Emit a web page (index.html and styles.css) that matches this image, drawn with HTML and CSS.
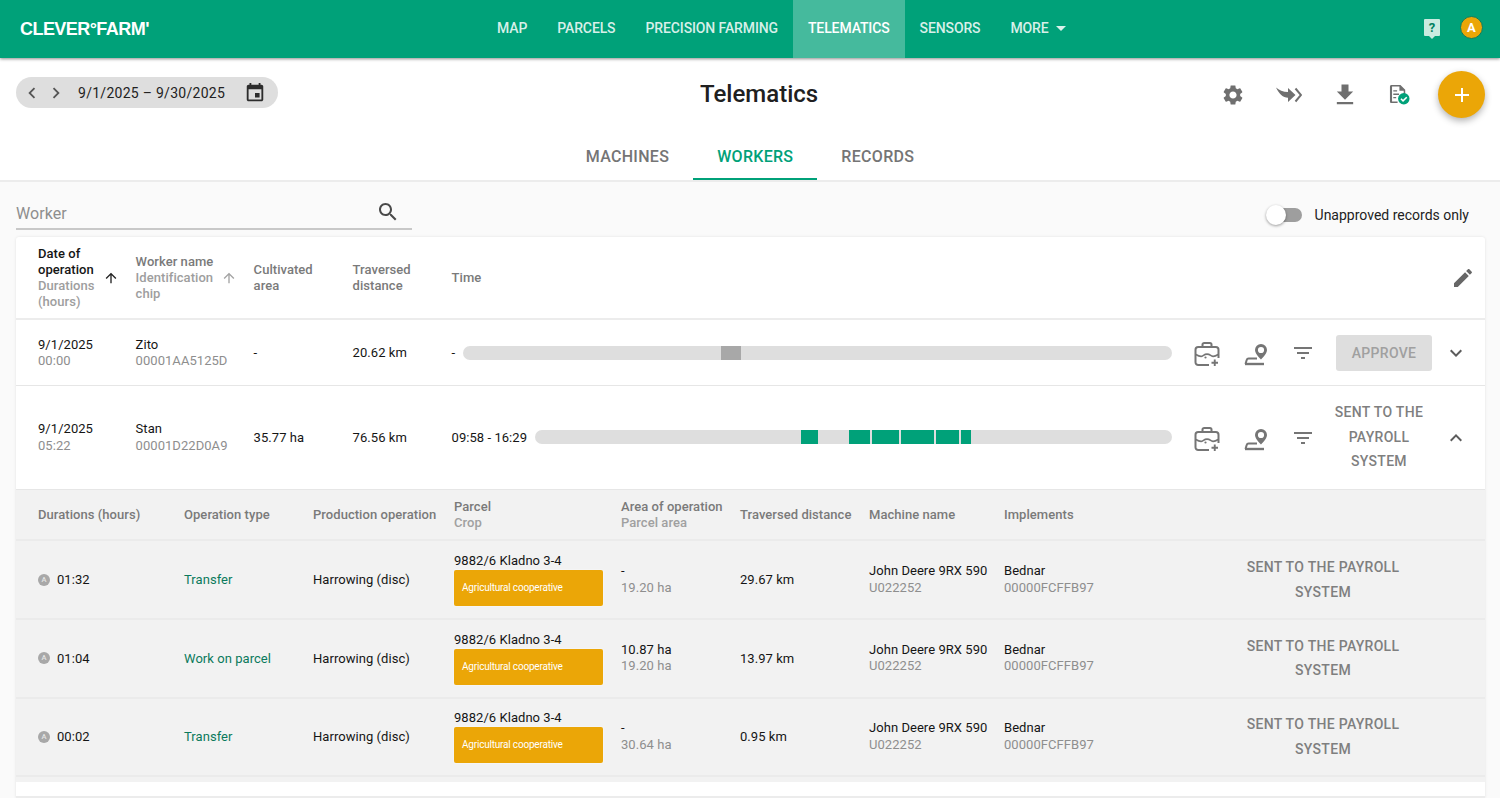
FILE: index.html
```html
<!DOCTYPE html>
<html lang="en">
<head>
<meta charset="utf-8">
<title>Telematics</title>
<link rel="stylesheet" href="styles.css">
</head>
<body>
<svg class="defs" width="0" height="0" aria-hidden="true">
  <symbol id="i-case" viewBox="0 0 26 26">
    <path d="M8.500 7V4.600C8.500 3.700 9.200 3 10.100 3h5.800c.9 0 1.600.7 1.600 1.600V7" fill="none" stroke="currentColor" stroke-width="2"/>
    <path d="M15 25H4.200C2.700 25 1.500 23.800 1.500 22.300V9.700C1.500 8.200 2.700 7 4.200 7h17.600c1.500 0 2.700 1.200 2.700 2.700V18" fill="none" stroke="currentColor" stroke-width="2"/>
    <path d="M1.800 14.500c2.600 1.500 4.400 2.200 6.200 1.700 1.600-.5 2.200-2 5-2s3.600 1.500 5.200 2c1.700.4 3.500-.2 6-1.700" fill="none" stroke="currentColor" stroke-width="1.700"/>
    <circle cx="11.500" cy="17.500" r="1.100" fill="currentColor"/>
    <path d="M19.800 19.500h1.900v2.300h2.300v1.900h-2.300V26h-1.900v-2.300h-2.300v-1.900h2.300z" fill="currentColor"/>
  </symbol>
  <symbol id="i-parcel" viewBox="0 0 26 26">
    <path d="M19 4a6 6 0 0 0-6 6c0 3.900 6 9.500 6 9.500s6-5.600 6-9.500a6 6 0 0 0-6-6zm0 2.900a3.100 3.100 0 1 1 0 6.200 3.100 3.100 0 0 1 0-6.200z" fill="currentColor"/>
    <path d="M3.500 24l1.100-3.800c.3-1 1-1.700 2-1.700H15" fill="none" stroke="currentColor" stroke-width="2"/>
    <path d="M3 24h19" fill="none" stroke="currentColor" stroke-width="2.400"/>
  </symbol>
  <symbol id="i-filter" viewBox="0 0 24 24"><path d="M10 18h4v-2h-4v2zM3 6v2h18V6H3zm3 7h12v-2H6v2z" fill="currentColor"/></symbol>
  <symbol id="i-up" viewBox="0 0 24 24"><path d="M4 12l1.410 1.410L11 7.830V20h2V7.830l5.580 5.590L20 12l-8-8-8 8z" fill="currentColor"/></symbol>
</svg>

<header class="topbar">
  <div class="logo">CLEVER°FARM'</div>
  <nav class="mainnav">
    <a class="navitem">Map</a>
    <a class="navitem">Parcels</a>
    <a class="navitem">Precision farming</a>
    <a class="navitem navitem-on">Telematics</a>
    <a class="navitem">Sensors</a>
    <a class="navitem">More<span class="caret"></span></a>
  </nav>
  <div class="topright">
    <span class="help">?</span>
    <span class="avatar">A</span>
  </div>
</header>

<section class="pagehead">
  <div class="toolbar">
    <div class="datepill">
      <svg class="pillchev" viewBox="0 0 24 24"><path d="M15.410 7.410L14 6l-6 6 6 6 1.410-1.410L10.830 12z"/></svg>
      <svg class="pillchev" viewBox="0 0 24 24"><path d="M10 6L8.590 7.410 13.170 12l-4.580 4.590L10 18l6-6z"/></svg>
      <span class="daterange">9/1/2025 – 9/30/2025</span>
      <svg class="pillcal" viewBox="0 0 24 24"><path d="M17 12h-5v5h5v-5zM16 1v2H8V1H6v2H5c-1.110 0-1.990.9-1.990 2L3 19c0 1.100.89 2 2 2h14c1.100 0 2-.9 2-2V5c0-1.100-.9-2-2-2h-1V1h-2zm3 18H5V8h14v11z"/></svg>
    </div>
    <h1 class="title">Telematics</h1>
    <div class="tools">
      <svg class="tool tool-gear" viewBox="0 0 24 24"><path d="M19.140 12.940c.04-.3.06-.61.06-.94 0-.32-.02-.64-.07-.94l2.030-1.580c.18-.14.23-.41.12-.61l-1.920-3.320c-.12-.22-.37-.29-.59-.22l-2.390.96c-.5-.38-1.030-.7-1.620-.94l-.36-2.540c-.04-.24-.24-.41-.48-.41h-3.840c-.24 0-.43.17-.47.41l-.36 2.540c-.59.24-1.130.57-1.620.94l-2.390-.96c-.22-.08-.47 0-.59.22L2.740 8.870c-.12.21-.08.47.12.61l2.030 1.580c-.05.3-.09.63-.09.94s.02.64.07.94l-2.030 1.580c-.18.14-.23.41-.12.61l1.920 3.320c.12.22.37.29.59.22l2.390-.96c.5.38 1.030.7 1.620.94l.36 2.540c.05.24.24.41.48.41h3.840c.24 0 .44-.17.47-.41l.36-2.540c.59-.24 1.130-.56 1.620-.94l2.390.96c.22.08.47 0 .59-.22l1.920-3.320c.12-.22.07-.47-.12-.61l-2.010-1.580zM12 15.600c-1.980 0-3.600-1.620-3.600-3.600s1.620-3.600 3.600-3.600 3.600 1.620 3.600 3.600-1.620 3.600-3.600 3.600z"/></svg>
      <svg class="tool tool-send" viewBox="0 0 26 16"><path d="M0 .5C3 3 7 5 12 5V1l7.500 7-7.500 7v-4.200C7 10.800 3 7 0 .5z"/><path class="send-chev" d="M19.500 1.500L25 8l-5.500 6.500"/></svg>
      <svg class="tool tool-down" viewBox="0 0 24 24"><path d="M19 9h-4V3H9v6H5l7 7 7-7zM5 18v2h14v-2H5z"/></svg>
      <svg class="tool tool-report" viewBox="0 0 22 22">
        <path d="M2.500 1h9.500l5 5v5h-1.600V7h-4.500V2.600H3.200v15.800H9V20H2.500C1.700 20 1 19.300 1 18.500v-16C1 1.700 1.700 1 2.500 1z"/>
        <path d="M4.500 6.500h4v1.400h-4zM4.500 10h6v1.400h-6zM4.500 13.500h3v1.400h-3z"/>
        <circle class="ok-dot" cx="15.500" cy="15.500" r="6"/>
        <path class="ok-tick" d="M12.500 15.500l2.200 2.200 3.900-3.900"/>
      </svg>
      <button class="fab" type="button"><svg class="fabplus" viewBox="0 0 24 24"><path d="M19 13h-6v6h-2v-6H5v-2h6V5h2v6h6v2z"/></svg></button>
    </div>
  </div>
  <div class="tabs">
    <a class="tab">Machines</a>
    <a class="tab tab-on">Workers</a>
    <a class="tab">Records</a>
  </div>
</section>

<section class="filters">
  <label class="searchbox">
    <span class="searchph">Worker</span>
    <svg class="searchicon" viewBox="0 0 24 24"><path d="M15.500 14h-.79l-.28-.27C15.410 12.590 16 11.110 16 9.500 16 5.910 13.090 3 9.500 3S3 5.910 3 9.500 5.910 16 9.500 16c1.610 0 3.090-.59 4.230-1.570l.27.28v.79l5 4.990L20.490 19l-4.990-5zm-6 0C7.010 14 5 11.990 5 9.500S7.010 5 9.500 5 14 7.010 14 9.500 11.990 14 9.500 14z"/></svg>
  </label>
  <div class="switchwrap">
    <span class="switch"><span class="thumb"></span></span>
    <span class="switchlabel">Unapproved records only</span>
  </div>
</section>

<main class="card">
  <div class="mainrow headrow">
    <div class="hcell sorted">
      <div class="hcelltext hcelltext-date"><b>Date of operation</b><span>Durations (hours)</span></div>
      <svg class="sorticon sorticon-dark"><use href="#i-up"/></svg>
    </div>
    <div class="hcell sorted">
      <div class="hcelltext hcelltext-worker"><em>Worker name</em><span>Identification chip</span></div>
      <svg class="sorticon"><use href="#i-up"/></svg>
    </div>
    <div class="hcell"><em>Cultivated area</em></div>
    <div class="hcell"><em>Traversed distance</em></div>
    <div class="hcell timehead">
      <em>Time</em>
      <svg class="pencil" viewBox="0 0 24 24"><path d="M3 17.250V21h3.750L17.810 9.940l-3.750-3.750L3 17.250zM20.710 7.040c.39-.39.39-1.020 0-1.410l-2.340-2.340c-.39-.39-1.020-.39-1.410 0l-1.830 1.830 3.750 3.750 1.830-1.830z"/></svg>
    </div>
  </div>

  <div class="mainrow datarow datarow-a">
    <div class="stack"><span>9/1/2025</span><small>00:00</small></div>
    <div class="stack"><span>Zito</span><small>00001AA5125D</small></div>
    <div>-</div>
    <div>20.62 km</div>
    <div class="timecell">
      <span>-</span>
      <div class="bar"><i class="seg seg-gray" style="left:258px;width:20px"></i></div>
    </div>
    <div class="rowicons">
      <svg class="rowicon"><use href="#i-case"/></svg>
      <svg class="rowicon"><use href="#i-parcel"/></svg>
      <svg class="rowicon"><use href="#i-filter"/></svg>
    </div>
    <div class="actioncell"><button class="approve" type="button">Approve</button></div>
    <svg class="chev" viewBox="0 0 24 24"><path d="M16.590 8.590L12 13.170 7.410 8.590 6 10l6 6 6-6z"/></svg>
  </div>

  <div class="mainrow datarow datarow-b">
    <div class="stack"><span>9/1/2025</span><small>05:22</small></div>
    <div class="stack"><span>Stan</span><small>00001D22D0A9</small></div>
    <div>35.77 ha</div>
    <div>76.56 km</div>
    <div class="timecell">
      <span>09:58 - 16:29</span>
      <div class="bar">
        <i class="seg" style="left:266px;width:17px"></i>
        <i class="seg" style="left:314px;width:21px"></i>
        <i class="seg" style="left:337px;width:27px"></i>
        <i class="seg" style="left:366px;width:33px"></i>
        <i class="seg" style="left:401px;width:23px"></i>
        <i class="seg" style="left:426px;width:10px"></i>
      </div>
    </div>
    <div class="rowicons">
      <svg class="rowicon"><use href="#i-case"/></svg>
      <svg class="rowicon"><use href="#i-parcel"/></svg>
      <svg class="rowicon"><use href="#i-filter"/></svg>
    </div>
    <div class="actioncell"><div class="sent sent-narrow">Sent to the payroll system</div></div>
    <svg class="chev" viewBox="0 0 24 24"><path d="M12 8l-6 6 1.410 1.410L12 10.830l4.590 4.580L18 14z"/></svg>
  </div>

  <div class="details">
    <div class="detrow dethead">
      <div class="headone"><em>Durations (hours)</em></div>
      <div class="headone"><em>Operation type</em></div>
      <div class="headone"><em>Production operation</em></div>
      <div class="stack"><em>Parcel</em><span>Crop</span></div>
      <div class="stack"><em>Area of operation</em><span>Parcel area</span></div>
      <div class="headone"><em>Traversed distance</em></div>
      <div class="headone"><em>Machine name</em></div>
      <div class="headone"><em>Implements</em></div>
    </div>

    <div class="detrow detdata">
      <div class="dur"><span class="abadge">A</span>01:32</div>
      <div class="optype">Transfer</div>
      <div>Harrowing (disc)</div>
      <div class="parcel"><span>9882/6 Kladno 3-4</span><span class="chip">Agricultural cooperative</span></div>
      <div class="stack"><span>-</span><small>19.20 ha</small></div>
      <div>29.67 km</div>
      <div class="stack"><span>John Deere 9RX 590</span><small>U022252</small></div>
      <div class="stack"><span>Bednar</span><small>00000FCFFB97</small></div>
      <div class="sent sent-wide">Sent to the payroll system</div>
    </div>

    <div class="detrow detdata">
      <div class="dur"><span class="abadge">A</span>01:04</div>
      <div class="optype">Work on parcel</div>
      <div>Harrowing (disc)</div>
      <div class="parcel"><span>9882/6 Kladno 3-4</span><span class="chip">Agricultural cooperative</span></div>
      <div class="stack"><span>10.87 ha</span><small>19.20 ha</small></div>
      <div>13.97 km</div>
      <div class="stack"><span>John Deere 9RX 590</span><small>U022252</small></div>
      <div class="stack"><span>Bednar</span><small>00000FCFFB97</small></div>
      <div class="sent sent-wide">Sent to the payroll system</div>
    </div>

    <div class="detrow detdata">
      <div class="dur"><span class="abadge">A</span>00:02</div>
      <div class="optype">Transfer</div>
      <div>Harrowing (disc)</div>
      <div class="parcel"><span>9882/6 Kladno 3-4</span><span class="chip">Agricultural cooperative</span></div>
      <div class="stack"><span>-</span><small>30.64 ha</small></div>
      <div>0.95 km</div>
      <div class="stack"><span>John Deere 9RX 590</span><small>U022252</small></div>
      <div class="stack"><span>Bednar</span><small>00000FCFFB97</small></div>
      <div class="sent sent-wide">Sent to the payroll system</div>
    </div>
    <div class="detpad"></div>
  </div>
  <div class="cardgap"></div>
  <div class="nextrow"></div>
</main>
</body>
</html>
```

FILE: styles.css
```css
* { box-sizing: border-box; }
html, body { margin: 0; height: 798px; overflow: hidden; }
body {
  font-family: Roboto, "Liberation Sans", sans-serif;
  font-size: 13px;
  color: #151515;
  background: #fafafa;
  letter-spacing: .05px;
}
.defs { display: block; height: 0; }

/* top bar */
.topbar {
  position: relative;
  z-index: 2;
  display: flex;
  align-items: stretch;
  height: 58px;
  background: #00a179;
  box-shadow: 0 1px 3px rgba(0,0,0,.45);
}
.logo {
  width: 482px;
  padding: 18px 0 0 20px;
  font: 700 18px/22px "Liberation Sans", sans-serif;
  letter-spacing: -.55px;
  color: #fff;
}
.mainnav { display: flex; }
.navitem {
  display: flex;
  align-items: center;
  padding: 0 15px 2px;
  font-size: 14px;
  font-weight: 500;
  letter-spacing: -.12px;
  text-transform: uppercase;
  color: rgba(255,255,255,.85);
}
.navitem-on { color: #fff; background: rgba(255,255,255,.27); }
.caret {
  margin-left: 7px;
  border: 5px solid transparent;
  border-top-color: rgba(255,255,255,.85);
  border-bottom: 0;
}
.topright { display: flex; align-items: center; margin-left: auto; padding: 0 17px 4px 0; gap: 20px; }
.help {
  position: relative;
  width: 16px;
  height: 17px;
  border-radius: 1px;
  background: #c9ebe0;
  color: #00805f;
  font: 700 13px/17px Roboto, sans-serif;
  text-align: center;
}
.help::after {
  content: "";
  position: absolute;
  left: 5px;
  bottom: -3px;
  border: 3px solid transparent;
  border-top-color: #c9ebe0;
  border-bottom: 0;
}
.avatar {
  width: 23px;
  height: 23px;
  border-radius: 50%;
  background: #eba607;
  border: 1px solid #0a7c60;
  color: #fff;
  font: 700 13px/21px Roboto, sans-serif;
  text-align: center;
}

/* page head */
.pagehead { background: #fff; height: 124px; border-bottom: 2px solid #ececec; }
.toolbar {
  display: grid;
  grid-template-columns: 684px auto 1fr;
  align-items: center;
  height: 72px;
  padding: 0 15px 0 16px;
}
.datepill {
  display: flex;
  align-items: center;
  width: 262px;
  height: 31px;
  margin-top: -3px;
  padding-left: 5px;
  border-radius: 16px;
  background: #dedede;
}
.pillchev { width: 22px; height: 22px; margin-right: 2px; fill: #555; }
.daterange { margin-left: 9px; font-size: 14px; letter-spacing: .28px; color: #222; }
.pillcal { width: 22px; height: 22px; margin-left: 19px; fill: #2c2c2c; }
.title { margin: 0; font-size: 24px; font-weight: 500; letter-spacing: 0; color: #202020; }
.tools { display: flex; align-items: center; justify-content: flex-end; padding-top: 1px; }
.tool { fill: #6f6f6f; flex: none; }
.tool-gear { width: 24px; height: 24px; margin-right: 31px; }
.tool-send { width: 26px; height: 16px; margin-right: 29px; }
.send-chev { fill: none; stroke: #6f6f6f; stroke-width: 2; }
.tool-down { width: 28px; height: 28px; margin-right: 30px; }
.tool-report { width: 21px; height: 21px; margin-right: 28px; }
.ok-dot { fill: #00a179; }
.ok-tick { fill: none; stroke: #fff; stroke-width: 1.600; }
.fab {
  flex: none;
  display: flex;
  align-items: center;
  justify-content: center;
  width: 47px;
  height: 47px;
  padding: 0;
  border: 0;
  border-radius: 50%;
  background: #eba607;
  box-shadow: 0 3px 7px rgba(0,0,0,.3);
}
.fabplus { width: 24px; height: 24px; fill: #fff; }
.tabs { display: flex; justify-content: center; height: 50px; }
.tab {
  display: flex;
  align-items: center;
  padding: 2px 24px 0;
  font-size: 16px;
  font-weight: 500;
  letter-spacing: .3px;
  text-transform: uppercase;
  color: #757575;
}
.tab-on { color: #00a179; border-bottom: 2px solid #00a179; padding-top: 4px; }

/* filters */
.filters { display: flex; justify-content: space-between; align-items: flex-start; height: 55px; padding: 0 31px 0 16px; }
.searchbox {
  display: flex;
  align-items: center;
  justify-content: space-between;
  width: 396px;
  height: 48px;
  padding: 16px 12px 0 0;
  border-bottom: 2px solid #c8c8c8;
}
.searchph { font-size: 16px; color: #8e8e8e; }
.searchicon { width: 24px; height: 24px; fill: #4a4a4a; margin-top: -3px; }
.switchwrap { display: flex; align-items: center; gap: 13px; padding-top: 25px; }
.switch { position: relative; display: block; width: 35px; height: 14px; border-radius: 7px; background: #9e9e9e; }
.thumb {
  position: absolute;
  left: -1px;
  top: -3px;
  width: 20px;
  height: 20px;
  border-radius: 50%;
  background: #fff;
  box-shadow: 0 1px 3px rgba(0,0,0,.4);
}
.switchlabel { font-size: 14px; color: #222; letter-spacing: 0; }

/* card */
.card {
  width: 1469px;
  margin-left: 16px;
  background: #fff;
  border-radius: 3px 3px 0 0;
  box-shadow: 0 0 3px rgba(0,0,0,.1);
}
.mainrow {
  display: grid;
  grid-template-columns: 97.600px 118px 99px 99px 731.400px 144px 105px 48px;
  align-items: center;
  padding-left: 22px;
  border-bottom: 1px solid #e6e6e6;
}
.headrow { grid-template-columns: 97.600px 118px 99px 99px 1fr; height: 83px; border-bottom-width: 2px; border-bottom-color: #ececec; }
.hcell { line-height: 16px; color: #7a7a7a; font-weight: 500; }
.hcell em { font-style: normal; display: block; width: 70px; }
.hcell b { display: block; font-weight: 500; color: #151515; }
.hcell span { display: block; color: #9e9e9e; }
.sorted { display: flex; align-items: center; }
.hcelltext { flex: none; }
.hcelltext em { width: auto; }
.hcelltext-date { width: 65px; }
.hcelltext-worker { width: 85px; }
.hcelltext-worker span { width: 80px; }
.sorticon { width: 16px; height: 16px; color: #a3a3a3; }
.sorticon-dark { color: #222; }
.timehead { display: flex; align-items: center; justify-content: space-between; padding-right: 10px; }
.pencil { width: 24px; height: 24px; fill: #666; }
.datarow-a { height: 66px; }
.datarow-a .stack { padding-top: 1px; }
.datarow-b { height: 103px; border-bottom: 0; }
.datarow-b .bar { margin-top: -1px; }
.stack { display: flex; flex-direction: column; line-height: 16.500px; }
.stack small { font-size: 13px; color: #8e8e8e; }
.timecell { display: flex; align-items: center; gap: 8px; padding-right: 11px; }
.bar { position: relative; flex: 1; height: 14px; border-radius: 7px; background: #dedede; overflow: hidden; }
.seg { position: absolute; top: 0; bottom: 0; background: #00a179; }
.seg-gray { background: #a8a8a8; }
.rowicons { display: flex; align-items: center; }
.rowicon { width: 26px; height: 26px; margin: 0 11px; color: #757575; }
.rowicon:last-child { width: 24px; height: 24px; margin: 0 12px; }
.actioncell { display: flex; justify-content: flex-end; }
.approve {
  width: 96px;
  height: 36px;
  padding: 0;
  border: 0;
  border-radius: 3px;
  background: #dedede;
  font: 500 14px Roboto, sans-serif;
  letter-spacing: .3px;
  text-transform: uppercase;
  color: #a0a0a0;
}
.sent {
  font-size: 14px;
  font-weight: 500;
  line-height: 24.500px;
  letter-spacing: .3px;
  text-align: center;
  text-transform: uppercase;
  color: #7f7f7f;
}
.sent-narrow { width: 96px; margin: -1px 5px 0 0; }
.chev { justify-self: center; width: 24px; height: 24px; fill: #5c5c5c; }

/* detail table */
.details { background: #f2f2f2; border-top: 1px solid #e6e6e6; }
.detrow {
  display: grid;
  grid-template-columns: 146px 129px 141px 167px 119px 129px 135px 224px 190px;
  align-items: center;
  padding-left: 22px;
  border-bottom: 2px solid #ebebeb;
}
.dethead { height: 51.300px; padding-top: 1px; }
.headone { margin-top: -2px; }
.dethead em { font-style: normal; font-weight: 500; color: #7a7a7a; }
.dethead span { color: #a0a0a0; font-weight: 500; }
.detdata { height: 78.670px; }
.dur { display: flex; align-items: center; gap: 7px; }
.abadge {
  width: 12px;
  height: 12px;
  border-radius: 50%;
  background: #a8a8a8;
  color: #e4e4e4;
  font-size: 7.500px;
  font-weight: 500;
  line-height: 12px;
  text-align: center;
}
.optype { color: #0b7a5c; }
.parcel { display: flex; flex-direction: column; align-items: flex-start; line-height: 16px; }
.chip {
  display: flex;
  align-items: center;
  width: 149px;
  height: 36px;
  margin-top: 1px;
  padding-left: 8px;
  border-radius: 2px;
  background: #eba607;
  box-shadow: 0 0 0 1px rgba(255,255,255,.25);
  color: #fff;
  font-size: 10px;
  letter-spacing: -.2px;
}
.sent-wide { padding: 0 8px; }
.detpad { height: 4.700px; }
.cardgap { height: 14px; }
.nextrow { height: 2px; background: #ececec; }
```
